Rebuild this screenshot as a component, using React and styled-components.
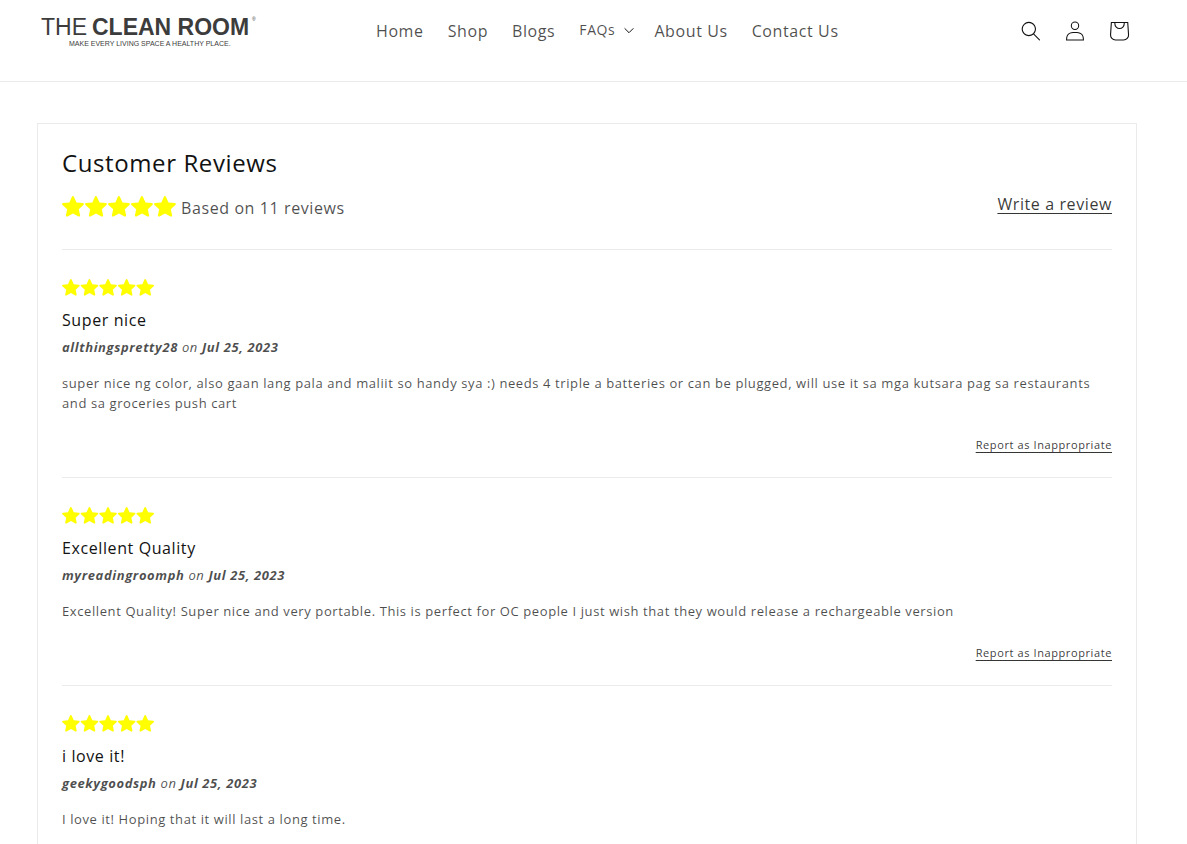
import styled, { createGlobalStyle } from "styled-components";

const GlobalStyle = createGlobalStyle`
  *,
  *::before,
  *::after {
    box-sizing: border-box;
  }

  html {
    font-size: 62.5%;
  }

  body {
    margin: 0;
    background-color: white;
    color: rgba(18, 18, 18, 0.75);
    font-family: "Open Sans", sans-serif;
    font-size: 16px;
    line-height: 24px;
    letter-spacing: 0.06rem;
  }
`;

const StyledHeader = styled.header`
  border-bottom: 1px solid #ebebeb;
`;

const HeaderContent = styled.div`
  display: grid;
  grid-template-columns: auto auto 1fr;
  align-items: start;
  column-gap: 104px;
  padding: 9px 46px 28px 40px;
`;

const LogoLink = styled.a`
  display: block;
  padding-top: 5px;
`;

const LogoDrawing = styled.svg`
  display: block;
  width: 220px;
  height: 36px;
  font-family: "Liberation Sans", Arial, sans-serif;
  letter-spacing: normal;
  fill: #3c3c3c;
`;

const NavList = styled.ul`
  display: flex;
  margin: 0;
  padding: 0;
  list-style: none;
`;

const NavLink = styled.a`
  display: block;
  padding: 10px 12px;
  color: rgba(18, 18, 18, 0.75);
  text-decoration: none;
  white-space: nowrap;
`;

const NavToggle = styled.button`
  display: flex;
  align-items: center;
  gap: 9px;
  padding: 10px 8px 10px 12px;
  border: 0;
  background: none;
  color: rgba(18, 18, 18, 0.75);
  font-family: inherit;
  font-size: 14px;
  line-height: 22px;
  letter-spacing: inherit;
`;

const HeaderIcons = styled.div`
  display: flex;
  justify-content: flex-end;
`;

const IconLink = styled.a`
  display: flex;
  align-items: center;
  justify-content: center;
  width: 44px;
  height: 44px;
  color: #121212;
`;

const IconButton = styled(IconLink).attrs({ as: "button", type: "button" })`
  padding: 0;
  border: 0;
  background: none;
`;

const Icon = styled.svg`
  display: block;
  flex: none;
  width: ${(props) => props.$size}px;
  height: ${(props) => props.$size}px;
  fill: currentColor;
`;

const Page = styled.main`
  padding: 41px 50px 41px 37px;
`;

const ReviewsCard = styled.section`
  padding: 24px;
  border: 1px solid #ebebeb;
`;

const ReviewsTitle = styled.h2`
  margin: 0;
  color: #121212;
  font-size: 24px;
  font-weight: 400;
  line-height: 30px;
`;

const Summary = styled.div`
  display: flex;
  align-items: flex-start;
  justify-content: space-between;
  padding: 14px 0 29px;
`;

const SummaryRating = styled.div`
  display: flex;
  align-items: flex-start;
  gap: 4px;
  padding-top: 4px;
`;

const StarsDrawing = styled.svg`
  display: block;
  width: ${(props) => props.$width}px;
  height: auto;
  fill: #ffff00;
`;

const TextLink = styled.a`
  color: rgba(18, 18, 18, 0.85);
  text-decoration: underline;
  text-underline-offset: 3px;
`;

const StyledReview = styled.article`
  padding: 29px 0 24px;
  border-top: 1px solid #ebebeb;
`;

const ReviewTitle = styled.h3`
  margin: 12px 0 4px;
  color: #121212;
  font-size: 16px;
  font-weight: 400;
  line-height: 24px;
`;

const Byline = styled.div`
  font-size: 13px;
  font-style: italic;
  line-height: 22px;
`;

const ReviewBody = styled.p`
  margin: 15px 0 24px;
  font-size: 13px;
  line-height: 20px;
`;

const ReviewFooter = styled.div`
  font-size: 11px;
  line-height: 16px;
  text-align: right;
`;

const reviews = [
  {
    title: "Super nice",
    author: "allthingspretty28",
    date: "Jul 25, 2023",
    body: "super nice ng color, also gaan lang pala and maliit so handy sya :) needs 4 triple a batteries or can be plugged, will use it sa mga kutsara pag sa restaurants and sa groceries push cart",
  },
  {
    title: "Excellent Quality",
    author: "myreadingroomph",
    date: "Jul 25, 2023",
    body: "Excellent Quality! Super nice and very portable. This is perfect for OC people I just wish that they would release a rechargeable version",
  },
  {
    title: "i love it!",
    author: "geekygoodsph",
    date: "Jul 25, 2023",
    body: "I love it! Hoping that it will last a long time.",
  },
];

function Logo() {
  return (
    <LogoDrawing viewBox="0 0 220 36" role="img" aria-label="The Clean Room">
      <text x="1" y="21" fontSize="23">
        THE
      </text>
      <text x="52" y="21" fontSize="23" fontWeight="bold">
        CLEAN ROOM
      </text>
      <text x="212" y="7" fontSize="5">
        ®
      </text>
      <text x="29" y="32" fontSize="7">
        MAKE EVERY LIVING SPACE A HEALTHY PLACE.
      </text>
    </LogoDrawing>
  );
}

function Stars({ width }) {
  return (
    <StarsDrawing
      $width={width}
      viewBox="0 0 115 21"
      role="img"
      aria-label="5 out of 5 stars"
    >
      {[0, 1, 2, 3, 4].map((i) => (
        <path
          key={i}
          transform={`translate(${i * 23} 0)`}
          d="M9.8.9c.5-1.200 1.700-1.200 2.200 0l2.500 5.500 6.200.7c1.200.2 1.500 1.100.7 1.900l-4.600 4.200 1.300 6c.2 1.200-.6 1.700-1.600 1.200l-5.500-3-5.500 3c-1 .5-1.800 0-1.600-1.200l1.300-6L.5 9C-.3 8.200 0 7.300 1.200 7.100l6.200-.7z"
        />
      ))}
    </StarsDrawing>
  );
}

function Header() {
  return (
    <StyledHeader>
      <HeaderContent>
        <LogoLink href="#">
          <Logo />
        </LogoLink>
        <nav>
          <NavList>
            <li>
              <NavLink href="#">Home</NavLink>
            </li>
            <li>
              <NavLink href="#">Shop</NavLink>
            </li>
            <li>
              <NavLink href="#">Blogs</NavLink>
            </li>
            <li>
              <NavToggle type="button">
                FAQs
                <Icon $size={10} viewBox="0 0 10 10" aria-hidden="true">
                  <path
                    d="M.6 3.300 5 7.700 9.400 3.300"
                    fill="none"
                    stroke="#121212"
                  />
                </Icon>
              </NavToggle>
            </li>
            <li>
              <NavLink href="#">About Us</NavLink>
            </li>
            <li>
              <NavLink href="#">Contact Us</NavLink>
            </li>
          </NavList>
        </nav>
        <HeaderIcons>
          <IconButton aria-label="Search">
            <Icon $size={20} viewBox="0 0 18 19">
              <path
                fillRule="evenodd"
                d="M11.03 11.68A5.784 5.784 0 112.850 3.500a5.784 5.784 0 018.180 8.180zm.26 1.120a6.780 6.780 0 11.720-.7l5.400 5.400a.5.5 0 11-.71.7l-5.410-5.400z"
              />
            </Icon>
          </IconButton>
          <IconLink href="#" aria-label="Log in">
            <Icon $size={20} viewBox="0 0 18 19">
              <path
                fillRule="evenodd"
                d="M6 4.500a3 3 0 116 0 3 3 0 01-6 0zm3-4a4 4 0 100 8 4 4 0 000-8zm5.580 12.150c1.120.82 1.830 2.240 1.910 4.850H1.510c.08-2.600.79-4.030 1.900-4.850C4.660 11.750 6.500 11.500 9 11.500s4.350.26 5.580 1.150zM9 10.500c-2.500 0-4.650.24-6.170 1.350C1.270 12.980.5 14.930.5 18v.5h17V18c0-3.070-.77-5.020-2.330-6.150-1.520-1.100-3.670-1.350-6.170-1.350z"
              />
            </Icon>
          </IconLink>
          <IconLink href="#" aria-label="Cart">
            <Icon $size={44} viewBox="0 0 40 40">
              <path
                fillRule="evenodd"
                d="M15.750 11.800h-3.160l-.77 11.600a5 5 0 0 0 4.990 5.340h7.380a5 5 0 0 0 4.990-5.330L28.400 11.800zm0 1h-2.220l-.71 10.670a4 4 0 0 0 3.990 4.270h7.380a4 4 0 0 0 4-4.270l-.72-10.670h-2.220v.63a4.750 4.750 0 1 1-9.500 0zm8.500 0h-7.500v.63a3.750 3.750 0 1 0 7.500 0z"
              />
            </Icon>
          </IconLink>
        </HeaderIcons>
      </HeaderContent>
    </StyledHeader>
  );
}

function Review({ review }) {
  return (
    <StyledReview>
      <Stars width={93} />
      <ReviewTitle>{review.title}</ReviewTitle>
      <Byline>
        <strong>{review.author}</strong> on <strong>{review.date}</strong>
      </Byline>
      <ReviewBody>{review.body}</ReviewBody>
      <ReviewFooter>
        <TextLink href="#">Report as Inappropriate</TextLink>
      </ReviewFooter>
    </StyledReview>
  );
}

function App() {
  return (
    <>
      <GlobalStyle />
      <Header />
      <Page>
        <ReviewsCard>
          <ReviewsTitle>Customer Reviews</ReviewsTitle>
          <Summary>
            <SummaryRating>
              <Stars width={115} />
              <span>Based on 11 reviews</span>
            </SummaryRating>
            <TextLink href="#">Write a review</TextLink>
          </Summary>
          {reviews.map((review) => (
            <Review key={review.author} review={review} />
          ))}
        </ReviewsCard>
      </Page>
    </>
  );
}

export default App;
